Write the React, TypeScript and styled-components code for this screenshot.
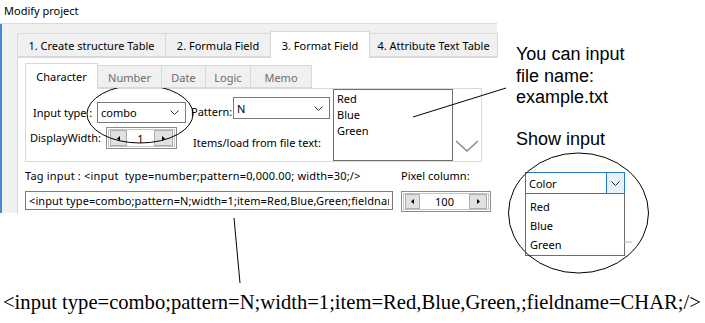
import React from "react";
import styled, { createGlobalStyle } from "styled-components";

const Global = createGlobalStyle`
  html, body { margin: 0; padding: 0; background: #ffffff; }
  body { width: 705px; height: 323px; overflow: hidden; }
  * { box-sizing: border-box; }
`;

const UI = `"Noto Sans", "Open Sans", sans-serif`;

const Page = styled.div`
  position: relative;
  width: 705px;
  height: 323px;
  background: #fff;
  font-family: ${UI};
  font-size: 11px;
  line-height: 15px;
  color: #000;
`;

const TopRow = styled.div`
  display: flex;
  align-items: flex-start;
  height: 256px;
`;

const Window = styled.div`
  width: 497px;
  height: 213px;
  display: flex;
  flex-direction: column;
  flex: none;
`;

const TitleBar = styled.div`
  height: 24px;
  padding: 3px 0 0 4px;
  background: #fff;
  border-bottom: 1px solid #dadada;
`;

const Body = styled.div`
  flex: 1;
  display: flex;
  background: #f0f0f0;
  border-left: 2px solid #3d8ad6;
  padding: 7px 0 0 15px;
`;

const TabControl = styled.div<{ $w: number }>`
  width: ${(p) => p.$w}px;
  display: flex;
  flex-direction: column;
`;

const TabStrip = styled.div<{ $h: number }>`
  height: ${(p) => p.$h}px;
  display: flex;
  align-items: flex-end;
`;

const Tab = styled.div<{ $w: number; $h: number; $active?: boolean; $dim?: boolean }>`
  position: relative;
  z-index: ${(p) => (p.$active ? 2 : 1)};
  width: ${(p) => p.$w}px;
  height: ${(p) => (p.$active ? p.$h + 3 : p.$h)}px;
  margin-bottom: ${(p) => (p.$active ? -1 : 0)}px;
  margin-right: -1px;
  display: flex;
  align-items: center;
  justify-content: center;
  padding-top: ${(p) => (p.$active ? 0 : 1)}px;
  background: ${(p) => (p.$active ? "#ffffff" : "#f0f0f0")};
  border: 1px solid #d9d9d9;
  border-bottom: ${(p) => (p.$active ? "none" : "1px solid #d9d9d9")};
  color: ${(p) => (p.$dim ? "#6d6d6d" : "#000")};
  white-space: nowrap;
`;

const OuterPage = styled.div`
  flex: 1;
  background: #ffffff;
  border-top: 1px solid #d9d9d9;
  border-left: 1px solid #d9d9d9;
  padding: 5px 0 0 7px;
`;

const InnerPage = styled.div`
  height: 74px;
  background: #ffffff;
  border: 1px solid #d9d9d9;
  display: flex;
  align-items: flex-start;
`;

const Form = styled.div`
  width: 307px;
  display: flex;
  flex-direction: column;
`;

const FormRow = styled.div<{ $mt: number }>`
  display: flex;
  align-items: flex-start;
  margin-top: ${(p) => p.$mt}px;
`;

const Label = styled.div<{ $w?: number; $ml?: number; $mt?: number; $ls?: number }>`
  width: ${(p) => (p.$w ? `${p.$w}px` : "auto")};
  margin-left: ${(p) => p.$ml ?? 0}px;
  margin-top: ${(p) => p.$mt ?? 0}px;
  letter-spacing: ${(p) => p.$ls ?? 0}px;
  white-space: pre;
`;

const Combo = styled.div<{ $w: number; $h: number; $mt?: number }>`
  width: ${(p) => p.$w}px;
  height: ${(p) => p.$h}px;
  margin-top: ${(p) => p.$mt ?? 0}px;
  border: 1px solid #7a7a7a;
  background: #fff;
  display: flex;
  align-items: center;
  justify-content: space-between;
  padding: 0 6px 0 3px;
`;

const Spinner = styled.div<{ $w: number; $h: number }>`
  width: ${(p) => p.$w}px;
  height: ${(p) => p.$h}px;
  border: 1px solid #8c8c8c;
  box-shadow: inset 0 0 0 1px #ffffff, inset 0 0 0 2px #c4c4c4;
  background: #fff;
  display: flex;
  align-items: center;
  justify-content: space-between;
  padding: 0 3px;
`;

const SpinButton = styled.div<{ $w: number; $h: number }>`
  width: ${(p) => p.$w}px;
  height: ${(p) => p.$h}px;
  background: #e1e1e1;
  border: 1px solid #adadad;
  display: flex;
  align-items: center;
  justify-content: center;
`;

const SpinValue = styled.div`
  flex: 1;
  text-align: center;
`;

const ListBox = styled.div`
  width: 120px;
  height: 72px;
  border: 1px solid #6e6e6e;
  background: #fff;
  padding: 1px 3px;
  line-height: 16px;
`;

const BigChevron = styled.svg`
  margin: 51px 0 0 2px;
  flex: none;
`;

const TagGrid = styled.div`
  display: grid;
  grid-template-columns: 368px 90px;
  column-gap: 8px;
  row-gap: 8px;
  margin-top: 6px;
  align-items: start;
`;

const TagInput = styled.input`
  width: 368px;
  height: 19px;
  border: 1px solid #7a7a7a;
  padding: 0 3px;
  margin: 0;
  font-family: ${UI};
  font-size: 11px;
  letter-spacing: 0.1px;
  color: #000;
  background: #fff;
  outline: none;
`;

const Side = styled.div`
  display: flex;
  flex-direction: column;
  padding-left: 19px;
`;

const Note = styled.div<{ $mt: number }>`
  margin-top: ${(p) => p.$mt}px;
  font-family: "Liberation Sans", Arial, sans-serif;
  font-size: 18px;
  line-height: 21.5px;
  color: #000;
`;

const DemoCombo = styled.div`
  margin: 22px 0 0 9px;
  width: 100px;
  height: 22px;
  border: 1px solid #2a7cc7;
  background: #fff;
  display: flex;
  align-items: stretch;
`;

const DemoText = styled.div`
  flex: 1;
  padding-left: 3px;
  display: flex;
  align-items: center;
`;

const DemoButton = styled.div`
  width: 18px;
  background: #e5f1fb;
  border-left: 1px solid #2a7cc7;
  display: flex;
  align-items: center;
  justify-content: center;
`;

const DropList = styled.div`
  margin-left: 9px;
  width: 100px;
  height: 62px;
  border: 1px solid #6e6e6e;
  border-top: none;
  background: #fff;
  padding: 3px 0 0 4px;
  line-height: 19px;
`;

const BottomText = styled.div`
  margin-top: 35px;
  padding-left: 3px;
  font-family: "Liberation Serif", "Times New Roman", serif;
  font-size: 20.6px;
  line-height: 23px;
  white-space: nowrap;
  color: #000;
`;

const Overlay = styled.svg`
  position: absolute;
  left: 0;
  top: 0;
  pointer-events: none;
`;

const SmallChevron = ({ color = "#333" }: { color?: string }) => (
  <svg width="9" height="5" viewBox="0 0 9 5">
    <polyline points="0.5,0.5 4.5,4.5 8.5,0.5" fill="none" stroke={color} strokeWidth="1" />
  </svg>
);

const Arrow = ({ dir }: { dir: "l" | "r" }) => (
  <svg width="3" height="5" viewBox="0 0 3 5">
    {dir === "l" ? <polygon points="3,0 0,2.5 3,5" fill="#000" /> : <polygon points="0,0 3,2.5 0,5" fill="#000" />}
  </svg>
);

export default function App() {
  return (
    <Page>
      <Global />
      <TopRow>
        <Window>
          <TitleBar>Modify project</TitleBar>
          <Body>
            <TabControl $w={480}>
              <TabStrip $h={26}>
                <Tab $w={149} $h={24}>1. Create structure Table</Tab>
                <Tab $w={106} $h={24}>2. Formula Field</Tab>
                <Tab $w={100} $h={24} $active>3. Format Field</Tab>
                <Tab $w={129} $h={24}>4. Attribute Text Table</Tab>
              </TabStrip>
              <OuterPage>
                <TabControl $w={457}>
                  <TabStrip $h={25}>
                    <Tab $w={73} $h={23} $active>Character</Tab>
                    <Tab $w={65} $h={23} $dim>Number</Tab>
                    <Tab $w={45} $h={23} $dim>Date</Tab>
                    <Tab $w={46} $h={23} $dim>Logic</Tab>
                    <Tab $w={62} $h={23} $dim>Memo</Tab>
                  </TabStrip>
                  <InnerPage>
                    <Form>
                      <FormRow $mt={8}>
                        <Label $w={64} $ml={7} $mt={8}>Input type :</Label>
                        <Combo $w={89} $h={21} $mt={5}>
                          <span>combo</span>
                          <SmallChevron />
                        </Combo>
                        <Label $w={42} $ml={5} $mt={7}>Pattern:</Label>
                        <Combo $w={97} $h={22}>
                          <span>N</span>
                          <SmallChevron />
                        </Combo>
                      </FormRow>
                      <FormRow $mt={4}>
                        <Label $w={76} $ml={4} $mt={3}>DisplayWidth:</Label>
                        <Spinner $w={71} $h={22}>
                          <SpinButton $w={17} $h={16}>
                            <Arrow dir="l" />
                          </SpinButton>
                          <SpinValue>1</SpinValue>
                          <SpinButton $w={19} $h={16}>
                            <Arrow dir="r" />
                          </SpinButton>
                        </Spinner>
                        <Label $ml={16} $mt={8}>Items/load from file text:</Label>
                      </FormRow>
                    </Form>
                    <ListBox>
                      Red
                      <br />
                      Blue
                      <br />
                      Green
                    </ListBox>
                    <BigChevron width="24" height="12" viewBox="0 0 24 12">
                      <polyline points="1,1 12,11 23,1" fill="none" stroke="#8a8a8a" strokeWidth="1.5" />
                    </BigChevron>
                  </InnerPage>
                </TabControl>
                <TagGrid>
                  <Label $ls={0.18}>{"Tag input : <input  type=number;pattern=0,000.00; width=30;/>"}</Label>
                  <Label>Pixel column:</Label>
                  <TagInput
                    readOnly
                    value="<input type=combo;pattern=N;width=1;item=Red,Blue,Green;fieldname=CHAR;/>"
                  />
                  <Spinner $w={90} $h={21}>
                    <SpinButton $w={15} $h={15}>
                      <Arrow dir="l" />
                    </SpinButton>
                    <SpinValue>100</SpinValue>
                    <SpinButton $w={18} $h={15}>
                      <Arrow dir="r" />
                    </SpinButton>
                  </Spinner>
                </TagGrid>
              </OuterPage>
            </TabControl>
          </Body>
        </Window>
        <Side>
          <Note $mt={44}>
            You can input
            <br />
            file name:
            <br />
            example.txt
          </Note>
          <Note $mt={20}>Show input</Note>
          <DemoCombo>
            <DemoText>Color</DemoText>
            <DemoButton>
              <SmallChevron color="#222" />
            </DemoButton>
          </DemoCombo>
          <DropList>
            Red
            <br />
            Blue
            <br />
            Green
          </DropList>
        </Side>
      </TopRow>
      <BottomText>{"<input type=combo;pattern=N;width=1;item=Red,Blue,Green,;fieldname=CHAR;/>"}</BottomText>
      <Overlay width="705" height="323" viewBox="0 0 705 323">
        <ellipse cx="140" cy="114" rx="53" ry="29" fill="none" stroke="#000" strokeWidth="1" />
        <line x1="413" y1="117" x2="506" y2="88" stroke="#000" strokeWidth="1" />
        <line x1="234" y1="218" x2="240" y2="283" stroke="#000" strokeWidth="1" />
        <ellipse cx="578.5" cy="213" rx="70" ry="60" fill="none" stroke="#000" strokeWidth="1" />
        <line x1="624" y1="242" x2="632" y2="242" stroke="#b0b0b0" strokeWidth="1" />
      </Overlay>
    </Page>
  );
}
